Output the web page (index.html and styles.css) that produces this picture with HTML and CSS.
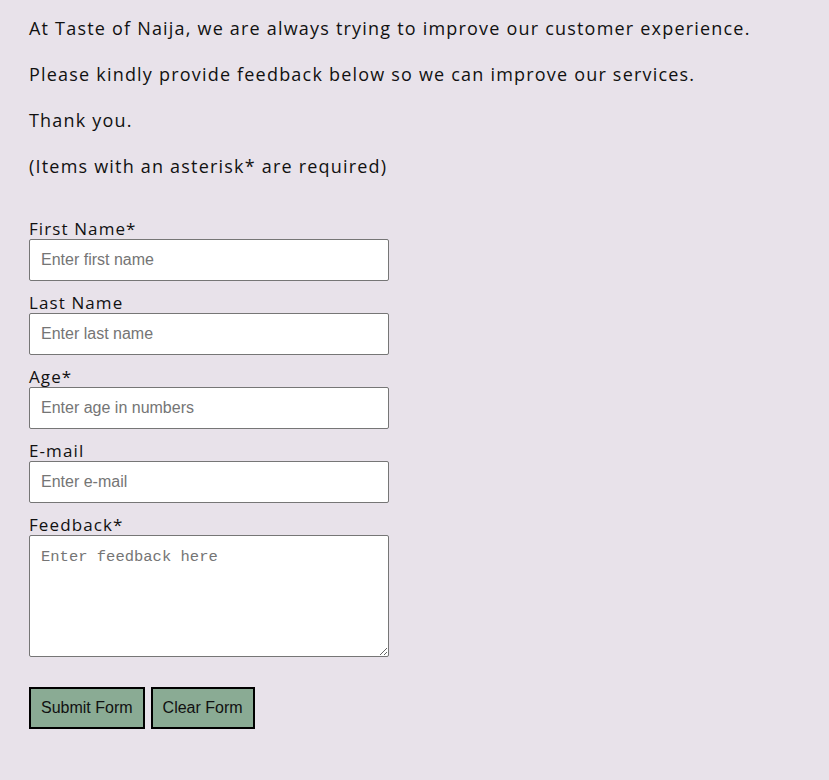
FILE: index.html
```html
<!DOCTYPE html>
<html lang="en">
<head>
<meta charset="utf-8">
<title>Feedback - Taste of Naija</title>
<link rel="stylesheet" href="styles.css">
</head>
<body>
<main class="page">
  <section class="intro">
    <p>At Taste of Naija, we are always trying to improve our customer experience.</p>
    <p>Please kindly provide feedback below so we can improve our services.</p>
    <p>Thank you.</p>
    <p>(Items with an asterisk* are required)</p>
  </section>
  <form class="feedback-form">
    <label class="field-label" for="fname">First Name*</label>
    <input class="field" type="text" id="fname" placeholder="Enter first name">
    <label class="field-label" for="lname">Last Name</label>
    <input class="field" type="text" id="lname" placeholder="Enter last name">
    <label class="field-label" for="age">Age*</label>
    <input class="field" type="text" id="age" placeholder="Enter age in numbers">
    <label class="field-label" for="email">E-mail</label>
    <input class="field" type="text" id="email" placeholder="Enter e-mail">
    <label class="field-label" for="feedback">Feedback*</label>
    <textarea class="field area" id="feedback" placeholder="Enter feedback here"></textarea>
    <div class="actions">
      <button type="submit" class="btn">Submit Form</button>
      <button type="reset" class="btn">Clear Form</button>
    </div>
  </form>
</main>
</body>
</html>
```

FILE: styles.css
```css
html, body {
  margin: 0;
  background: #e8e2ea;
}
body {
  font-family: "Open Sans", sans-serif;
  color: #111;
}
.page {
  padding: 15px 29px;
}
.intro p {
  font-size: 18px;
  letter-spacing: 1.2px;
  line-height: 26px;
  margin: 0 0 20px;
}
.feedback-form {
  display: flex;
  flex-direction: column;
  align-items: flex-start;
  margin-top: 39px;
}
.field-label {
  font-size: 17px;
  letter-spacing: 1.1px;
  line-height: 22px;
  margin-top: 11px;
  margin-bottom: -1px;
}
.field-label:first-child {
  margin-top: 0;
}
.field {
  box-sizing: border-box;
  width: 360px;
  height: 42px;
  margin: 0;
  padding: 0 11px;
  border: 1px solid #767676;
  border-radius: 2px;
  background: #fff;
  font-family: "Liberation Sans", Arial, sans-serif;
  font-size: 16px;
  color: #111;
}
.field::placeholder {
  color: #757575;
}
.area {
  height: 122px;
  padding: 12px 11px;
  font-family: "Liberation Mono", monospace;
  font-size: 15.5px;
  resize: vertical;
}
.actions {
  display: flex;
  gap: 6px;
  margin-top: 30px;
}
.btn {
  box-sizing: border-box;
  height: 42px;
  padding: 0 10px;
  border: 2px solid #000;
  background: #8aab94;
  font-family: "Liberation Sans", Arial, sans-serif;
  font-size: 16px;
  color: #111;
}
```
